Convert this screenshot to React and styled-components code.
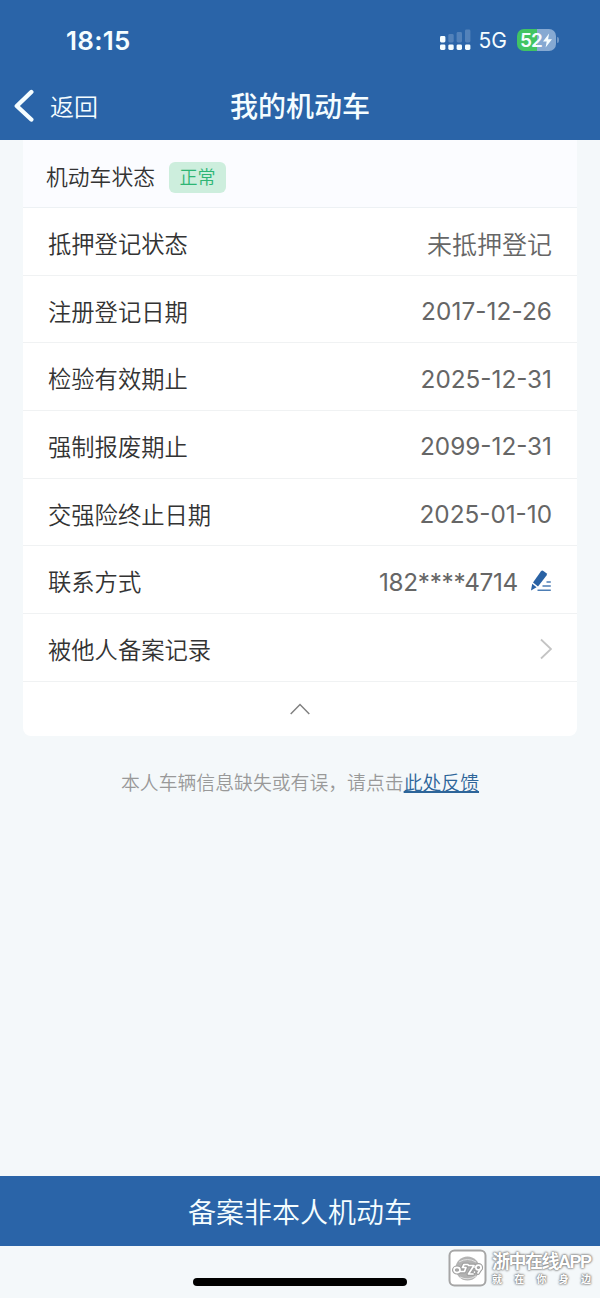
import React from 'react';
import styled, { createGlobalStyle } from 'styled-components';

const GlobalStyle = createGlobalStyle`
  * {
    box-sizing: border-box;
  }
  body {
    margin: 0;
    background: #f4f8fa;
    font-family: Inter, 'Noto Sans CJK SC', sans-serif;
  }
`;

const Screen = styled.div`
  position: relative;
  display: flex;
  flex-direction: column;
  width: 600px;
  height: 1298px;
  overflow: hidden;
  background: #f4f8fa;
`;

const Header = styled.header`
  height: 140px;
  flex-shrink: 0;
  background: #2a64a8;
  color: #f5fdff;
`;

const StatusBar = styled.div`
  display: flex;
  align-items: center;
  justify-content: space-between;
  height: 72px;
  padding: 8px 41px 0 66px;
`;

const Time = styled.span`
  padding-top: 2px;
  font-size: 26px;
  font-weight: 600;
  line-height: 30px;
  letter-spacing: 0.3px;
`;

const Indicators = styled.div`
  display: flex;
  align-items: center;
`;

const Network = styled.span`
  margin: 2px 10px 0 8px;
  font-size: 21px;
  line-height: 24px;
`;

const Battery = styled.div`
  display: flex;
  align-items: center;
  justify-content: center;
  width: 39px;
  height: 22px;
  border-radius: 7px;
  background: linear-gradient(90deg, #41c463 52%, #86a9d2 52%);
  font-size: 19px;
  font-weight: 600;
  letter-spacing: -0.8px;
`;

const BatteryTip = styled.i`
  width: 2px;
  height: 6px;
  margin-left: 1px;
  border-radius: 0 2px 2px 0;
  background: #6f97c6;
`;

const NavBar = styled.nav`
  display: grid;
  grid-template-columns: 1fr auto 1fr;
  align-items: center;
  height: 68px;
  padding: 0 14px;
`;

const Back = styled.button`
  display: flex;
  align-items: center;
  gap: 16px;
  padding: 0;
  border: 0;
  background: none;
  color: inherit;
  font: inherit;
  font-size: 24px;
  font-weight: 350;
  line-height: 34px;
`;

const BackText = styled.span`
  padding-top: 3px;
`;

const Title = styled.h1`
  margin: 0;
  padding-top: 2px;
  font-size: 28px;
  font-weight: 500;
  line-height: 40px;
`;

const Card = styled.section`
  margin: 0 23px;
  flex-shrink: 0;
  border-radius: 0 0 8px 8px;
  background: #fff;
`;

const CardHead = styled.div`
  display: flex;
  align-items: center;
  gap: 14px;
  height: 68px;
  padding: 7px 23px 0;
  border-bottom: 1px solid #edf1f4;
  background: #fbfcff;
  color: #333;
  font-size: 21.8px;
  font-weight: 350;
  line-height: 32px;
`;

const Tag = styled.span`
  width: 57px;
  height: 31px;
  border-radius: 6px;
  background: #cdeedd;
  color: #2db574;
  font-size: 18px;
  line-height: 32px;
  text-align: center;
`;

const Row = styled.div`
  display: flex;
  align-items: center;
  justify-content: space-between;
  height: 67.7px;
  padding: 6px 25px 0;
  border-bottom: 1px solid #f0f2f3;
`;

const Label = styled.span`
  padding-top: 1px;
  color: #333;
  font-size: 23.3px;
  font-weight: 350;
  line-height: 34px;
`;

const Value = styled.span`
  display: flex;
  align-items: center;
  gap: 12px;
  margin-top: ${(props) => (props.$cjk ? '1px' : '-2px')};
  color: #666;
  font-size: ${(props) => (props.$cjk ? '25px' : '24.3px')};
  font-weight: ${(props) => (props.$cjk ? 350 : 400)};
  letter-spacing: ${(props) => props.$spacing || '0'};
  line-height: 34px;

  svg {
    margin-top: -1px;
  }
`;

const Toggle = styled.button`
  display: flex;
  align-items: center;
  justify-content: center;
  width: 100%;
  height: 54px;
  padding: 0;
  border: 0;
  background: none;
`;

const Hint = styled.p`
  margin: 34px 0 0;
  color: #999;
  font-size: 18.85px;
  font-weight: 350;
  line-height: 28px;
  text-align: center;
`;

const FeedbackLink = styled.a`
  color: #2d6599;
  text-decoration: underline;
  text-decoration-thickness: 1.5px;
  text-underline-offset: 1px;
`;

const Footer = styled.footer`
  margin-top: auto;
  height: 122px;
  flex-shrink: 0;
`;

const SubmitButton = styled.button`
  display: block;
  width: 100%;
  height: 70px;
  padding: 0;
  border: 0;
  background: #2a64a8;
  color: #f5fdff;
  font: inherit;
  font-size: 28px;
  font-weight: 350;
`;

const HomeIndicator = styled.div`
  width: 214px;
  height: 8px;
  margin: 32px auto 0;
  border-radius: 4px;
  background: #000;
`;

const Watermark = styled.div`
  position: absolute;
  left: 448px;
  top: 1249px;
  display: flex;
  gap: 5px;
  color: #fff;
`;

const WatermarkText = styled.div`
  display: flex;
  flex-direction: column;
  width: 99px;
  padding-top: 2px;
  text-shadow: 0 0 2px #808080, 0 0 2px #808080, 0 0 3px #909090;
`;

const WatermarkName = styled.span`
  font-family: 'Liberation Sans', 'Noto Sans CJK SC', sans-serif;
  font-size: 18px;
  font-weight: 700;
  line-height: 22px;
  letter-spacing: -1.5px;
  white-space: nowrap;
`;

const WatermarkSlogan = styled.span`
  display: flex;
  justify-content: space-between;
  font-size: 10px;
  font-weight: 700;
  line-height: 12px;
`;

const details = [
  { label: '抵押登记状态', value: '未抵押登记', cjk: true },
  { label: '注册登记日期', value: '2017-12-26', spacing: '0.1px' },
  { label: '检验有效期止', value: '2025-12-31' },
  { label: '强制报废期止', value: '2099-12-31' },
  { label: '交强险终止日期', value: '2025-01-10' },
  { label: '联系方式', value: '182****4714', icon: 'edit', spacing: '-0.3px' },
  { label: '被他人备案记录', icon: 'arrow' },
];

const SignalIcon = () => (
  <svg width="31" height="22" viewBox="0 0 31 22" fill="#f5fdff">
    <rect x="0" y="7" width="5.4" height="6.4" rx="1.4" />
    <g fill="#6f97c6" opacity="0.6">
      <rect x="8.3" y="5" width="5.4" height="8.4" rx="1.4" />
      <rect x="16.6" y="3" width="5.4" height="10.4" rx="1.4" />
      <rect x="25" y="0.5" width="5.4" height="12.9" rx="1.4" />
    </g>
    <rect x="0" y="15.4" width="5.4" height="5.6" rx="1.4" />
    <rect x="8.3" y="15.4" width="5.4" height="5.6" rx="1.4" />
    <rect x="16.6" y="15.4" width="5.4" height="5.6" rx="1.4" />
    <rect x="25" y="15.4" width="5.4" height="5.6" rx="1.4" />
  </svg>
);

const BoltIcon = () => (
  <svg width="11" height="15" viewBox="0 0 10 15" fill="#f5fdff">
    <path d="M6.6 0.5 0.5 8.5H4.2L3.1 14.5 9.5 6.2H5.6Z" />
  </svg>
);

const BackIcon = () => (
  <svg width="20" height="34" viewBox="0 0 20 34" fill="none">
    <path
      d="M17.3 3 2.8 17 17.3 30.5"
      stroke="#f5fdff"
      strokeWidth="4.4"
      strokeLinecap="round"
      strokeLinejoin="round"
    />
  </svg>
);

const EditIcon = () => (
  <svg width="22" height="22" viewBox="0 0 22 22">
    <path d="M10.8 1.6Q12 0 13.4 1L16.4 3.2Q17.4 4.2 16.5 5.4L8 16.4 3 12.6Z" fill="#2a62a4" />
    <path d="M2.2 13.8 6.6 17.2 1 20.6Z" fill="#2a62a4" />
    <path
      d="M16.5 12H20.8M12.5 16H20.8M7.5 20.2H20.8"
      stroke="#4d7eb5"
      strokeWidth="1.5"
    />
  </svg>
);

const ArrowIcon = () => (
  <svg width="12" height="22" viewBox="0 0 12 22" fill="none">
    <path d="M1 1.5 11 11 1 20.5" stroke="#c4c4c4" strokeWidth="1.8" />
  </svg>
);

const CollapseIcon = () => (
  <svg width="20" height="12" viewBox="0 0 20 12" fill="none">
    <path d="M0.7 11 10 1.5 19.3 11" stroke="#808080" strokeWidth="1.5" />
  </svg>
);

const logoStrokes = (
  <>
    <ellipse cx="9" cy="21" rx="3" ry="2.6" />
    <path d="M20 15.5H16L14.5 18.5H18L16.5 22.5H12.5" />
    <path d="M20.5 16.5H26L20.5 25H25" />
    <path d="M27 18V18.1M26.5 23V23.1" />
    <ellipse cx="30.5" cy="18.5" rx="2.6" ry="2.4" />
    <path d="M33 19 30 24" />
  </>
);

const AppLogo = () => (
  <svg width="39" height="38" viewBox="0 0 39 38" fill="none">
    <rect x="1.5" y="1.5" width="36" height="35" rx="5" fill="#fff" stroke="#a6a6a6" strokeWidth="2" />
    <circle cx="19.5" cy="19.5" r="12" fill="#b3b3b3" />
    <path d="M11 13Q19.5 8 28 13M12 28Q20 32 28 27" stroke="#e0e0e0" strokeWidth="1" />
    <g stroke="#a0a0a0" strokeWidth="4" strokeLinecap="round" strokeLinejoin="round">
      {logoStrokes}
    </g>
    <g stroke="#fff" strokeWidth="1.7" strokeLinecap="round" strokeLinejoin="round">
      {logoStrokes}
    </g>
  </svg>
);

const DetailRow = ({ label, value, cjk, icon, spacing }) => (
  <Row>
    <Label>{label}</Label>
    <Value $cjk={cjk} $spacing={spacing}>
      {value}
      {icon === 'edit' && <EditIcon />}
      {icon === 'arrow' && <ArrowIcon />}
    </Value>
  </Row>
);

const App = () => {
  return (
    <>
      <GlobalStyle />
      <Screen>
        <Header>
          <StatusBar>
            <Time>18:15</Time>
            <Indicators>
              <SignalIcon />
              <Network>5G</Network>
              <Battery>
                52
                <BoltIcon />
              </Battery>
              <BatteryTip />
            </Indicators>
          </StatusBar>
          <NavBar>
            <Back>
              <BackIcon />
              <BackText>返回</BackText>
            </Back>
            <Title>我的机动车</Title>
          </NavBar>
        </Header>
        <Card>
          <CardHead>
            机动车状态
            <Tag>正常</Tag>
          </CardHead>
          {details.map((item) => (
            <DetailRow key={item.label} {...item} />
          ))}
          <Toggle>
            <CollapseIcon />
          </Toggle>
        </Card>
        <Hint>
          本人车辆信息缺失或有误，请点击<FeedbackLink>此处反馈</FeedbackLink>
        </Hint>
        <Footer>
          <SubmitButton>备案非本人机动车</SubmitButton>
          <HomeIndicator />
        </Footer>
        <Watermark>
          <AppLogo />
          <WatermarkText>
            <WatermarkName>浙中在线APP</WatermarkName>
            <WatermarkSlogan>
              <span>就</span>
              <span>在</span>
              <span>你</span>
              <span>身</span>
              <span>边</span>
            </WatermarkSlogan>
          </WatermarkText>
        </Watermark>
      </Screen>
    </>
  );
};

export default App;
